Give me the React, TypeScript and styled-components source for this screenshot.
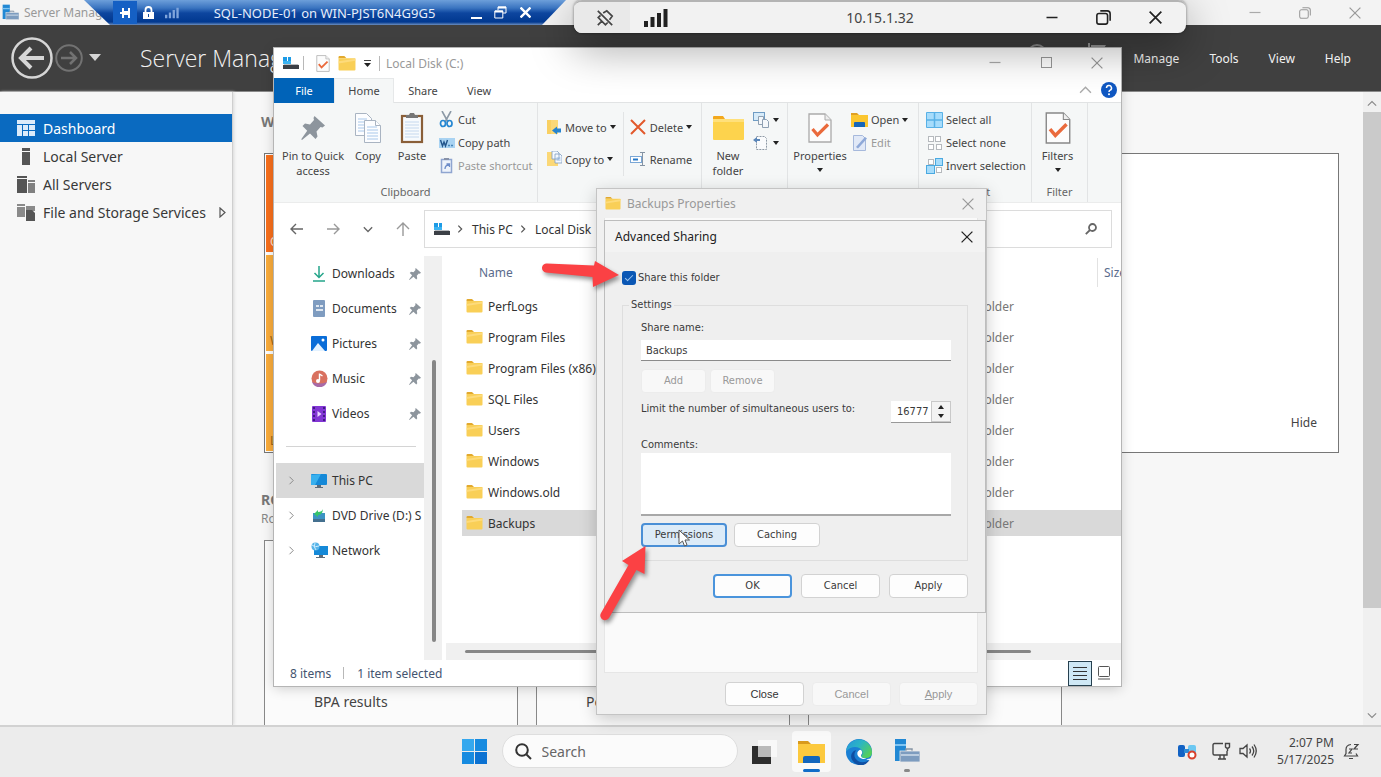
import React from "react";
import styled, { createGlobalStyle, css } from "styled-components";

const ui = `"Noto Sans", "Open Sans", sans-serif`;
const dialogFont = `"DejaVu Sans Condensed", "DejaVu Sans", sans-serif`;

const Global = createGlobalStyle`
  *, *::before, *::after { box-sizing: border-box; }
  body { margin: 0; font-family: ${ui}; font-size: 12px; color: #333; overflow: hidden; }
  button, input, textarea { font: inherit; color: inherit; margin: 0; padding: 0; border: 0; background: none; border-radius: 0; }
  svg { display: block; flex: none; }
  h1, h2, ul, p { margin: 0; padding: 0; font-weight: inherit; font-size: inherit; }
  ul { list-style: none; }
`;

/* ---------- desktop and Server Manager ---------- */

const Desktop = styled.div`
  position: relative;
  display: flex;
  flex-direction: column;
  height: 100vh;
  overflow: hidden;
  background: #f7f7f7;
`;

const ServerManager = styled.section`
  flex: 1;
  min-height: 0;
  display: flex;
  flex-direction: column;
`;

const ServerTitle = styled.header`
  display: flex;
  align-items: center;
  height: 25px;
  padding: 0 20px 0 2px;
  background: #f3f3f3;
  color: #999;
`;

const ServerName = styled.span`
  flex: 1;
  margin-left: 5px;
`;

const Controls = styled.div<{ $gap: number }>`
  display: flex;
  align-items: center;
  gap: ${(p) => p.$gap}px;
`;

const IconButton = styled.button`
  display: grid;
  place-items: center;
  min-width: 12px;
  flex: none;
`;

const ServerHeader = styled.div`
  display: flex;
  align-items: center;
  height: 67px;
  padding: 0 30px 0 11px;
  background: #404040;
  border-bottom: 1px solid #8a8a8a;
  color: #f2f2f2;
`;

const ServerHeading = styled.h1`
  flex: 1;
  margin-left: 37px;
  font-family: "Open Sans", ${ui};
  font-size: 23px;
  font-weight: 300;
  white-space: nowrap;
`;

const HeaderIcons = styled.div`
  display: flex;
  gap: 41px;
  margin-right: 25px;
`;

const MenuBar = styled.nav`
  display: flex;
  gap: 30px;
`;

const ServerBody = styled.div`
  flex: 1;
  min-height: 0;
  display: flex;
`;

const SideNav = styled.nav`
  width: 233px;
  padding-top: 22px;
  border-right: 1px solid #cfcfcf;
  box-shadow: 1px 0 3px #d8d8d8;
`;

const SideItem = styled.a<{ $active?: boolean }>`
  display: flex;
  align-items: center;
  gap: 8px;
  height: 28px;
  padding: 0 4px 0 17px;
  font-size: 14px;
  text-decoration: none;
  white-space: nowrap;
  color: ${(p) => (p.$active ? "#fff" : "#383838")};
  background: ${(p) => (p.$active ? "#0a6ac0" : "none")};
  & > svg { margin-left: 4px; }
`;

const SideIcon = styled.span`
  display: grid;
  place-items: center;
  width: 18px;
`;

const Dashboard = styled.main`
  flex: 1;
  min-width: 0;
  overflow: hidden;
  padding: 20px 24px 0 31px;
`;

const SectionTitle = styled.h2`
  font-size: 14px;
  font-weight: 700;
  line-height: 20px;
  color: #777;
  margin-left: -3px;
  white-space: nowrap;
`;

const SectionNote = styled.p`
  margin-left: -3px;
  line-height: 18px;
  color: #888;
`;

const WelcomeBox = styled.div`
  display: flex;
  justify-content: space-between;
  align-items: flex-end;
  height: 300px;
  margin: 21px 0 37px;
  border: 1px solid #777;
  background: #fff;
`;

const Tiles = styled.div`
  display: flex;
  flex-direction: column;
  gap: 3px;
  width: 180px;
  height: 100%;
  padding: 1px;
`;

const Tile = styled.a<{ $strong?: boolean }>`
  flex: 1;
  display: flex;
  align-items: flex-end;
  padding: 0 4px 2px;
  text-decoration: none;
  color: ${(p) => (p.$strong ? "#ffe3cf" : "#9c6415")};
  background: ${(p) => (p.$strong ? "#f9701c" : "#fbad3c")};
`;

const HideButton = styled.button`
  margin: 0 21px 21px 0;
  color: #444;
`;

const RoleCards = styled.div`
  display: flex;
  gap: 18px;
  margin-top: 12px;
`;

const RoleCard = styled.div`
  width: 254px;
  height: 240px;
  padding: 151px 0 0 49px;
  border: 1px solid #888;
  background: #fbfbfb;
  font-size: 14px;
  line-height: 20px;
  color: #444;
`;

const PageScroll = styled.div`
  display: flex;
  flex-direction: column;
  align-items: center;
  width: 18px;
  padding: 7px 0 5px;
  background: #f0f0f0;
`;

const PageThumb = styled.div`
  flex: 498;
  width: 18px;
  margin-top: 3px;
  background: #cacaca;
`;

const PageTrack = styled.div`
  flex: 102;
`;

/* ---------- remote session bars ---------- */

const SessionBar = styled.div`
  position: absolute;
  z-index: 4;
  top: 0;
  left: 84px;
  display: flex;
  align-items: center;
  width: 482px;
  height: 25px;
  padding: 0 35px 0 29px;
  font-size: 13px;
  color: #e6eefb;
  background: linear-gradient(#6d9fda 0, #3a74c0 8px, #0d469f 13px, #01388f 22px, #6d8fc0 25px);
  clip-path: polygon(0 0, 100% 0, 458px 100%, 26px 100%);
`;

const SessionPin = styled(IconButton)`
  width: 24px;
  height: 23px;
  background: #1560c4;
`;

const SessionStatus = styled.div`
  display: flex;
  align-items: center;
  gap: 11px;
  margin-left: 6px;
`;

const SessionName = styled.span`
  flex: 1;
  text-align: center;
  white-space: nowrap;
`;

const ConnectionBar = styled.div`
  position: absolute;
  z-index: 5;
  top: 0;
  left: 574px;
  display: flex;
  align-items: stretch;
  width: 612px;
  height: 33px;
  overflow: hidden;
  border-top: 2px solid #b4b4b4;
  border-radius: 8px;
  background: #f2f2f2;
  color: #444;
`;

const ConnectionShadow = styled.div`
  position: absolute;
  z-index: 3;
  top: 0;
  left: 574px;
  width: 612px;
  height: 33px;
  border-radius: 8px;
  box-shadow: 0 14px 44px rgba(0, 0, 0, 0.4), 0 0 3px rgba(0, 0, 0, 0.5);
`;

const UnpinArea = styled(IconButton)`
  width: 56px;
  padding-left: 5px;
  background: #e9e9e9;
`;

const ConnectionBody = styled.div`
  flex: 1;
  display: flex;
  align-items: center;
  justify-content: space-between;
  padding: 0 24px 0 14px;
  font-size: 14px;
`;

const ConnectionAddress = styled.span`
  padding-left: 46px;
`;

/* ---------- File Explorer ---------- */

const Explorer = styled.section`
  position: absolute;
  z-index: 1;
  top: 48px;
  right: 260px;
  bottom: 91px;
  left: 274px;
  display: flex;
  flex-direction: column;
  background: #fff;
  box-shadow: 0 0 0 1px #b5b5b5, 0 2px 12px rgba(0, 0, 0, 0.2);
  overflow: hidden;
`;

const ExplorerTitle = styled.header`
  display: flex;
  align-items: center;
  height: 30px;
  padding: 0 18px 0 8px;
  color: #999;
`;

const TitleText = styled.span`
  flex: 1;
  margin-left: 6px;
`;

const Bar = styled.i<{ $h: number; $m: string }>`
  width: 1px;
  height: ${(p) => p.$h}px;
  margin: ${(p) => p.$m};
  background: #b8b8b8;
`;

const QuickItem = styled(IconButton)`
  min-width: 0;
  margin-right: 8px;
`;

const Tabs = styled.nav`
  display: flex;
  height: 25px;
  font-size: 11px;
  border-bottom: 1px solid #e1e3e4;
`;

const Tab = styled.button<{ $kind?: "file" | "active"; $w: number }>`
  width: ${(p) => p.$w}px;
  height: 25px;
  color: #444;
  ${(p) => p.$kind === "file" && css`background: #0063b8; color: #fff;`}
  ${(p) => p.$kind === "active" && css`background: #f5f7f7; box-shadow: inset 1px 1px #e6e8e9, inset -1px 0 #e6e8e9;`}
`;

const TabsEnd = styled.div`
  flex: 1;
  display: flex;
  align-items: center;
  justify-content: flex-end;
  gap: 9px;
  padding-right: 4px;
`;

const Ribbon = styled.div`
  display: flex;
  height: 100px;
  background: #f5f7f7;
  border-bottom: 1px solid #ebecec;
  font-size: 11px;
  line-height: 15px;
  color: #444;
`;

const Group = styled.div<{ $w: number }>`
  display: flex;
  flex-direction: column;
  width: ${(p) => p.$w}px;
  border-right: 1px solid #e2e4e5;
`;

const GroupItems = styled.div<{ $pad?: number }>`
  flex: 1;
  display: flex;
  padding-left: ${(p) => p.$pad ?? 0}px;
`;

const GroupLabel = styled.div`
  height: 18px;
  text-align: center;
  color: #666;
`;

const BigButton = styled.button<{ $w: number }>`
  display: flex;
  flex-direction: column;
  align-items: center;
  width: ${(p) => p.$w}px;
  padding-top: 9px;
  text-align: center;
  line-height: 15px;
`;

const BigIcon = styled.span`
  display: grid;
  place-items: center;
  height: 32px;
  margin-bottom: 4px;
`;

const SmallColumn = styled.div<{ $top: number; $left?: number }>`
  display: flex;
  flex-direction: column;
  padding: ${(p) => p.$top}px 0 0 ${(p) => p.$left ?? 0}px;
`;

const SmallButton = styled.button<{ $h?: number; $dim?: boolean }>`
  display: flex;
  align-items: center;
  gap: 3px;
  height: ${(p) => p.$h ?? 23}px;
  white-space: nowrap;
  color: ${(p) => (p.$dim ? "#999" : "#444")};
`;

const ColumnRule = styled.i`
  width: 1px;
  height: 64px;
  margin: 9px 6px 0 7px;
  background: #e2e4e5;
`;

const CaretLine = styled.span`
  display: grid;
  place-items: center;
  height: 13px;
`;

const AddressRow = styled.div`
  display: flex;
  align-items: center;
  height: 52px;
  margin-bottom: 1px;
  padding: 0 9px 0 16px;
`;

const NavButtons = styled.div`
  display: flex;
  gap: 22px;
  width: 134px;
`;

const Address = styled.div`
  flex: 1;
  display: flex;
  align-items: center;
  gap: 7px;
  height: 38px;
  padding-left: 8px;
  border: 1px solid #dcdcdc;
  color: #333;
`;

const SearchField = styled.button`
  display: flex;
  align-items: center;
  justify-content: flex-end;
  width: 180px;
  height: 38px;
  margin-left: 8px;
  padding-right: 14px;
  border: 1px solid #dcdcdc;
`;

const ExplorerBody = styled.div`
  flex: 1;
  min-height: 0;
  display: flex;
`;

const Tree = styled.ul`
  width: 150px;
  padding-left: 2px;
  overflow: hidden;
`;

const TreeItem = styled.li<{ $selected?: boolean }>`
  display: grid;
  grid-template-columns: 35px 21px 1fr auto;
  align-items: center;
  height: 35px;
  padding-right: 3px;
  white-space: nowrap;
  background: ${(p) => (p.$selected ? "#d9d9d9" : "none")};
`;

const TreeMark = styled.span`
  padding-left: 12px;
`;

const TreeRule = styled.li`
  height: 1px;
  margin: 15px 8px 16px 10px;
  background: #d4d4d4;
`;

const TreeScroll = styled.div`
  width: 18px;
  padding: 104px 6px 18px 8px;
  background: #f0f0f0;
`;

const Thumb = styled.div`
  height: 100%;
  border-radius: 2px;
  background: #868686;
`;

const Listing = styled.div`
  flex: 1;
  min-width: 0;
  display: flex;
  flex-direction: column;
  margin-left: 4px;
`;

const ListArea = styled.div`
  flex: 1;
  min-height: 0;
  padding-left: 16px;
  overflow: hidden;
`;

const Files = styled.table`
  width: 100%;
  table-layout: fixed;
  border-spacing: 0;
  th, td { padding: 0; text-align: left; font-weight: 400; white-space: nowrap; overflow: hidden; }
  th { height: 36px; padding-bottom: 4px; color: #5a6b8c; }
`;

const NameHead = styled.div`
  padding-left: 17px;
`;

const SizeHead = styled.div`
  height: 29px;
  padding: 6px 0 0 6px;
  border-left: 1px solid #e2e2e2;
`;

const FileRow = styled.tr<{ $selected?: boolean }>`
  td {
    height: 31px;
    border-top: 1px solid transparent;
    border-bottom: 4px solid transparent;
    background: ${(p) => (p.$selected ? "#d9d9d9" : "#fff")};
    background-clip: padding-box;
  }
  td + td { color: #777; }
`;

const FileName = styled.div`
  display: flex;
  align-items: center;
  gap: 5px;
  padding-left: 4px;
`;

const ListScroll = styled.div`
  height: 17px;
  padding: 7px 90px 7px 19px;
  background: #f0f0f0;
`;

const StatusBar = styled.footer`
  display: flex;
  align-items: center;
  height: 26px;
  padding: 0 5px 0 16px;
  color: #44546f;
`;

const StatusSpace = styled.span`
  flex: 1;
`;

const ViewButton = styled.button<{ $on?: boolean }>`
  display: grid;
  place-items: center;
  width: 24px;
  height: 25px;
  border: 1px solid ${(p) => (p.$on ? "#26404f" : "transparent")};
  background: ${(p) => (p.$on ? "#cfe8f5" : "none")};
`;

/* ---------- dialogs ---------- */

const PropertiesWindow = styled.section`
  position: absolute;
  z-index: 2;
  top: 188px;
  left: 596px;
  display: flex;
  flex-direction: column;
  width: 391px;
  height: 527px;
  padding: 0 8px 8px 7px;
  border: 1px solid #c4c4c4;
  background: #f0f0f0;
  box-shadow: 0 4px 16px rgba(0, 0, 0, 0.2);
`;

const DialogTitle = styled.header<{ $dim?: boolean }>`
  display: flex;
  align-items: center;
  gap: 6px;
  height: ${(p) => (p.$dim ? 29 : 31)}px;
  padding: 0 ${(p) => (p.$dim ? 4 : 12)}px 0 ${(p) => (p.$dim ? 1 : 10)}px;
  color: ${(p) => (p.$dim ? "#999" : "#222")};
  background: ${(p) => (p.$dim ? "none" : "#f3f3f3")};
`;

const DialogName = styled.span`
  flex: 1;
`;

const PropertiesPanel = styled.div`
  flex: 1;
  background: #fafafa;
  border: 1px solid #e6e6e6;
  border-top: 0;
`;

const ButtonRow = styled.div<{ $gap: number; $mt: number }>`
  display: flex;
  justify-content: flex-end;
  gap: ${(p) => p.$gap}px;
  margin-top: ${(p) => p.$mt}px;
`;

const PushButton = styled.button<{ $w?: number; $tone?: "ring" | "hover" | "off" }>`
  width: ${(p) => p.$w ?? 79}px;
  height: 24px;
  border: 1px solid #d2d2d2;
  border-radius: 4px;
  background: #fdfdfd;
  ${(p) => p.$tone === "ring" && css`border: 2px solid #4a94dc;`}
  ${(p) => p.$tone === "hover" && css`border: 2px solid #4a8fd6; background: #dcebf8;`}
  ${(p) => p.$tone === "off" && css`border-color: #ececec; background: #f8f8f8; color: #999;`}
`;

const SheetButtons = styled(ButtonRow)`
  font-family: "Liberation Sans", Arial, sans-serif;
  font-size: 11px;
`;

const SharingWindow = styled.section`
  position: absolute;
  top: 31px;
  left: 7px;
  width: 382px;
  border: 1px solid #bdbdbd;
  background: #efefef;
`;

const SharingForm = styled.form`
  display: flex;
  flex-direction: column;
  padding: 18px 17px 14px 17px;
  font-family: ${dialogFont};
  font-size: 11px;
  line-height: 16px;
  color: #3a3a3a;
`;

const CheckLabel = styled.label`
  display: flex;
  align-items: center;
  gap: 2px;
`;

const CheckBox = styled.input`
  appearance: none;
  width: 14px;
  height: 14px;
  border-radius: 3px;
  background: #0a57b5;
  display: grid;
  place-items: center;
  &:checked::after {
    content: "";
    width: 8px;
    height: 4px;
    margin-top: -2px;
    border: solid #9cc4ee;
    border-width: 0 0 1px 1px;
    transform: rotate(-45deg);
  }
`;

const Settings = styled.fieldset`
  display: flex;
  flex-direction: column;
  min-width: 0;
  margin: 11px 0 0;
  padding: 7px 16px 13px 18px;
  border: 1px solid #dedede;
  legend { margin-left: -12px; padding: 0 2px; }
`;

const TextBox = styled.input`
  width: 100%;
  height: 21px;
  margin-top: 4px;
  padding: 0 5px;
  background: #fff;
  border-bottom: 1px solid #8a8a8a;
`;

const Comments = styled.textarea`
  display: block;
  width: 100%;
  height: 63px;
  resize: none;
  background: #fff;
  border-bottom: 2px solid #a8a8a8;
`;

const LimitRow = styled.div`
  display: flex;
  align-items: flex-start;
  justify-content: space-between;
  margin: 8px 0 14px;
  white-space: nowrap;
`;

const SpinBox = styled.div`
  display: flex;
  width: 60px;
  height: 22px;
  background: #fff;
  border-bottom: 1px solid #999;
  input { width: 40px; padding-left: 6px; }
`;

const SpinButtons = styled.div`
  flex: 1;
  display: grid;
  border: 1px solid #c9c9c9;
  background: #f3f3f3;
  button { display: grid; place-items: center; }
`;

const LeftButtons = styled.div<{ $gap: number; $mt: number }>`
  display: flex;
  gap: ${(p) => p.$gap}px;
  margin-top: ${(p) => p.$mt}px;
`;

const Overlay = styled.svg<{ $x: number; $y: number }>`
  position: absolute;
  z-index: 6;
  left: ${(p) => p.$x}px;
  top: ${(p) => p.$y}px;
  overflow: visible;
  pointer-events: none;
`;

/* ---------- taskbar ---------- */

const Taskbar = styled.footer`
  display: grid;
  grid-template-columns: 1fr auto 1fr;
  align-items: center;
  height: 52px;
  padding-bottom: 2px;
  border-top: 2px solid #d2d2d2;
  background: #ececec;
`;

const TaskCenter = styled.div`
  grid-column: 2;
  display: flex;
  align-items: center;
`;

const SearchPill = styled.label`
  display: flex;
  align-items: center;
  gap: 10px;
  width: 236px;
  height: 34px;
  margin: 0 14px 0 15px;
  padding-left: 12px;
  border: 1px solid #dedede;
  border-radius: 17px;
  background: #fbfbfb;
  font-size: 14px;
  input { width: 150px; outline: 0; }
  input::placeholder { color: #666; opacity: 1; }
`;

const TaskButton = styled.button<{ $active?: boolean }>`
  display: flex;
  flex-direction: column;
  align-items: center;
  justify-content: flex-end;
  width: ${(p) => (p.$active ? 39 : 26)}px;
  height: 41px;
  border-radius: 4px;
  background: ${(p) => (p.$active ? "#f9f9f9" : "none")};
`;

const TaskMark = styled.i<{ $kind: "none" | "dot" | "bar" }>`
  width: ${(p) => (p.$kind === "bar" ? 17 : 6)}px;
  height: 3px;
  margin-top: ${(p) => (p.$kind === "none" ? 4 : 5)}px;
  border-radius: 2px;
  background: ${(p) => ({ none: "transparent", dot: "#888", bar: "#0f6cc8" })[p.$kind]};
`;

const TaskGap = styled.i<{ $w: number }>`
  width: ${(p) => p.$w}px;
`;

const Tray = styled.div`
  display: flex;
  align-items: center;
  justify-content: flex-end;
  padding-right: 21px;
`;

const Clock = styled.time`
  margin: 0 9px 0 20px;
  text-align: right;
  line-height: 17px;
  color: #444;
`;

/* ---------- icons ---------- */

const Close = ({ s = 11, c = "#888", w = 1.2 }: { s?: number; c?: string; w?: number }) => (
  <svg width={s} height={s} viewBox="0 0 12 12" stroke={c} strokeWidth={w} fill="none"><path d="M.6.6l10.8 10.8M11.4.6L.6 11.4" /></svg>
);
const Minimize = ({ c = "#888", w = 1.2 }: { c?: string; w?: number }) => (
  <svg width="12" height="12" stroke={c} strokeWidth={w}><path d="M.5 5.500h11" /></svg>
);
const Maximize = () => (
  <svg width="12" height="12" fill="none" stroke="#999"><rect x="1.500" y=".5" width="10" height="10" /></svg>
);
const Restore = ({ s = 12, c = "#888", w = 1.2 }: { s?: number; c?: string; w?: number }) => (
  <svg width={s} height={s} viewBox="0 0 14 14" fill="none" stroke={c} strokeWidth={w}>
    <rect x=".8" y="3.2" width="10" height="10" rx="2" /><path d="M4 .8h6.500a2.800 2.800 0 0 1 2.700 2.700V10" />
  </svg>
);
const Caret = () => (
  <svg width="6" height="4"><path d="M0 0h6L3 4z" fill="#222" /></svg>
);
const Chevron = ({ d = "M2 1l5 5-5 5", c = "#888", w = 1.3, s = 10 }: { d?: string; c?: string; w?: number; s?: number }) => (
  <svg width={s} height={s} viewBox="0 0 12 12" fill="none" stroke={c} strokeWidth={w}><path d={d} /></svg>
);
const UP = "M1 8l5-5 5 5";
const DOWN = "M1 4l5 5 5-5";

const Folder = ({ w = 17, h = 14 }: { w?: number; h?: number }) => (
  <svg width={w} height={h} viewBox="0 0 34 28" preserveAspectRatio="none">
    <path d="M1 2q0-2 2-2h9l4 4H1z" fill="#e2a92d" />
    <path d="M1 4h31q1 0 1 1v20q0 2-2 2H3q-2 0-2-2z" fill="#f9cf57" />
    <path d="M1 10L33 5v4L1 14z" fill="#ffe08a" opacity=".7" />
  </svg>
);
const Drive = () => (
  <svg width="17" height="13"><path d="M1 0h4v4H1zM6 0h3v4H6z" fill="#1d9be6" /><path d="M1 4h8v3H1z" fill="#3cb4f2" /><path d="M2 7h14l1 2H1z" fill="#b9bcc0" /><path d="M1 8h16v4H1z" fill="#3c4046" /></svg>
);
const ServerIcon = ({ s = 18 }: { s?: number }) => (
  <svg width={s} height={s} viewBox="0 0 26 26">
    <path d="M1 1h11v22H1z" fill="#2188d4" /><path d="M1 6h11v2H1z" fill="#7fc4f2" />
    <path d="M12 13v-2h6v2" fill="none" stroke="#8795a5" strokeWidth="1.500" />
    <rect x="6" y="13" width="20" height="11" fill="#7d9cbf" stroke="#ececec" strokeWidth=".8" /><path d="M7 17h18" stroke="#cfdcea" strokeWidth="1.500" />
  </svg>
);
const Doc = ({ w = 24, h = 30, c = "#aaa" }: { w?: number; h?: number; c?: string }) => (
  <svg width={w} height={h} viewBox="0 0 24 30" fill="none">
    <path d="M1 1h16l6 6v22H1z" fill="#fcfcfc" stroke={c} strokeWidth="1.300" /><path d="M17 1v6h6" stroke={c} fill="#eee" />
    <path d="M4.500 16l5 6L20 11.500" stroke="#ea6a3c" strokeWidth="3.200" />
  </svg>
);
const Pin = ({ s = 12 }: { s?: number }) => (
  <svg width={s} height={s} viewBox="0 0 24 24" fill="#8d959d">
    <path d="M13.500 0l10.500 9.500-2.500 2-2-.5-4 4.500 1 5-2 2.500-5.500-5.500L1 24l-.8-.8 6-8.500L1.500 10l2.500-2.500 5 1 4-4.500-.5-2z" />
  </svg>
);
const CopyIcon = () => (
  <svg width="27" height="31" fill="#fcfdff" stroke="#a9b4c2">
    <path d="M.5.5h11l5 5v17H.5z" /><path d="M3 6h9M3 9h10M3 12h10M3 15h10M3 18h10" stroke="#a9c8ea" />
    <path d="M9.500 7.500h11l5 5v17h-16z" /><path d="M20.500 7.500v5h5" /><path d="M12 14h10M12 17h11M12 20h11M12 23h11M12 26h11" stroke="#a9c8ea" />
  </svg>
);
const PasteIcon = () => (
  <svg width="24" height="32" fill="none">
    <rect x="2" y="4" width="20" height="26" fill="#f7fafd" stroke="#8a5f38" strokeWidth="2.200" />
    <path d="M6 6h12V3h-3l-1-2h-4L9 3H6z" fill="#777" />
    <path d="M5 10h14M5 13h14M5 16h14M5 19h14M5 22h14M5 25h14" stroke="#c5d8ee" />
  </svg>
);
const CutIcon = () => (
  <svg width="16" height="17" fill="none"><path d="M3 0l6 11M12 0L6 11" stroke="#8b99a6" strokeWidth="1.600" /><ellipse cx="4" cy="12.500" rx="2.500" ry="3" stroke="#2587d2" strokeWidth="1.700" /><ellipse cx="10.500" cy="12.500" rx="2.500" ry="3" stroke="#2587d2" strokeWidth="1.700" /></svg>
);
const PathIcon = () => (
  <svg width="16" height="10"><rect width="16" height="10" fill="#a9d3f2" /><path d="M1.500 2l2 6 1.500-4 1.500 4 2-6" fill="none" stroke="#23558c" strokeWidth="1.400" /><path d="M9 7.500h6" stroke="#4785b9" strokeDasharray="2 1" strokeWidth="1.500" /></svg>
);
const ShortcutIcon = () => (
  <svg width="16" height="16" fill="none"><rect x="2.500" y="1.500" width="10" height="13" fill="#eef3fb" stroke="#8fa5d0" strokeWidth="1.500" /><path d="M5 1h5" stroke="#8792a8" strokeWidth="2" /><path d="M6 11q0-4 4-4M7.500 6H10.500v3" stroke="#6d8cc8" strokeWidth="1.300" /></svg>
);
const MoveIcon = () => (
  <svg width="16" height="16"><path d="M1 1h11v14H1z" fill="#fbd877" /><path d="M1 1h4v14H1z" fill="#f9d062" /><path d="M6 11.500l5-4v2h4v4h-4v2z" fill="#2684d0" /></svg>
);
const CopyToIcon = () => (
  <svg width="16" height="16"><path d="M1 1h11v14H1z" fill="#fbd877" /><path d="M6 0h5l2 2v6H6zM9 3h5l2 2v7H9z" fill="#f4f9ff" stroke="#7f9dc0" strokeWidth=".8" /><path d="M10.500 7h4M10.500 9h4" stroke="#7ba7d8" strokeWidth=".8" /></svg>
);
const DeleteIcon = () => (
  <svg width="17" height="16" stroke="#e2592c" strokeWidth="2" fill="none"><path d="M1 1l14 14M15 1L1 15" /></svg>
);
const RenameIcon = () => (
  <svg width="17" height="14" fill="none"><rect x=".5" y="4.500" width="11" height="6" fill="#fff" stroke="#7aa7d6" /><path d="M3 7.500h5" stroke="#2679c8" strokeWidth="2" /><path d="M10 .5h5M10 13.500h5M12.500 1v12" stroke="#8594a4" /></svg>
);
const BigFolder = () => (
  <svg width="31" height="26"><path d="M0 2q0-1 1-1h9l2 3h-12z" fill="#f3a81c" /><path d="M0 4h31v20q0 1-1 1H1q-1 0-1-1z" fill="#fdd34d" /><path d="M0 4h31v3H0z" fill="#ffe07a" /></svg>
);
const NewItemIcon = () => (
  <svg width="17" height="16" fill="none" stroke="#8fa0b2"><rect x=".5" y=".5" width="11" height="8" fill="#d7ebf9" stroke="#6f9cc4" /><path d="M5.500 4.500h5v8h-5z" fill="#f5f8fb" /><path d="M9.500 7.500h4l2 2v6h-6z" fill="#f5f8fb" /></svg>
);
const EasyIcon = () => (
  <svg width="17" height="16" fill="none"><path d="M3.500 1.500h8l2 2v11h-10z" stroke="#8e99a5" fill="#fafbfc" strokeDasharray="2 1" /><path d="M0 5l4-3v2h3v2H4v2z" fill="#5b86b8" /></svg>
);
const OpenIcon = () => (
  <svg width="17" height="16"><path d="M0 1h6l2 2H0z" fill="#e0a022" /><path d="M0 3h17v12H0z" fill="#fbc62f" /><path d="M3 15v-4q0-1 1-1h9q1 0 1 1v4z" fill="#1666b8" /></svg>
);
const EditIcon = () => (
  <svg width="17" height="16"><path d="M2.500.5h9l3 3v12h-12z" fill="#e1e9f7" stroke="#a6b9dc" /><path d="M5 12L14 2l2 1.500L7 13.500z" fill="#8fa9d8" /></svg>
);
const GridIcon = ({ kind }: { kind: "all" | "none" | "invert" }) => {
  if (kind === "all") {
    return (
      <svg width="17" height="16"><path d="M.5.5h16v15H.5z" fill="#a6dcfb" stroke="#58b1e6" /><path d="M8.500 0v16M0 8h17" stroke="#58b1e6" strokeWidth="1.500" /></svg>
    );
  }
  const cell = (a: boolean) => ({ fill: a ? "#a6dcfb" : "#fff", stroke: a ? "#4aa9e0" : "#b5b9bd" });
  const v = kind === "invert";
  return (
    <svg width="17" height="16">
      <rect x="2.500" y="1.500" width="5" height="5" {...cell(false)} /><rect x="9.500" y={v ? ".5" : "1.500"} width={v ? 7 : 5} height={v ? 7 : 5} {...cell(v)} />
      <rect x={v ? ".5" : "2.500"} y={v ? "7.500" : "9.500"} width={v ? 8 : 5} height={v ? 8 : 5} {...cell(v)} /><rect x="10.500" y="9.500" width="5" height="5" {...cell(false)} />
    </svg>
  );
};
const Arrow = ({ d, c = "#666" }: { d: string; c?: string }) => (
  <svg width="14" height="14" fill="none" stroke={c} strokeWidth="1.400"><path d={d} /></svg>
);
const Signal = ({ w, h, c }: { w: number; h: number; c: string }) => (
  <svg width={w} height={h} viewBox="0 0 24 18" fill={c}><path d="M0 12h4v6H0zM6.500 8h4v10h-4zM13 4h4v14h-4zM19.500 0h4v18h-4z" /></svg>
);
const treeIcons: Record<string, React.ReactNode> = {
  Downloads: <svg width="16" height="16" fill="none" stroke="#25a58a" strokeWidth="1.500"><path d="M8 0v11M3.500 7L8 11.500 12.500 7M2 15h12" /></svg>,
  Documents: <svg width="16" height="17"><rect x="2" width="12" height="17" rx="1" fill="#7f9cc0" /><path d="M5 6h3M9 6h3M5 10h7" stroke="#fff" strokeWidth="1.300" /></svg>,
  Pictures: <svg width="16" height="15"><rect width="16" height="15" rx="1" fill="#0a6dd8" /><path d="M1 15l6-8 7 8z" fill="#e4f2ff" /><circle cx="12" cy="4" r="1.500" fill="#fff" /></svg>,
  Music: <svg width="17" height="17"><circle cx="8.500" cy="8.500" r="8" fill="#d9715f" /><path d="M1 12a8 8 0 0 0 15 0 20 20 0 0 1-15 0z" fill="#a76aa8" /><path d="M8.500 3.500v7M8.500 4l3 2" stroke="#fff" strokeWidth="1.400" /><circle cx="7" cy="11" r="2" fill="#fff" /></svg>,
  Videos: <svg width="16" height="16"><rect x="1" width="14" height="16" rx="1" fill="#8236d4" /><path d="M3 1v14M13 1v14" stroke="#431b86" strokeWidth="2" strokeDasharray="2 2" /><path d="M6.500 5l4 3-4 3z" fill="#e8d6ff" /></svg>,
  "This PC": <svg width="16" height="14"><rect width="16" height="11" rx="1" fill="#1589d8" /><path d="M0 1L10 0 4 11H0z" fill="#38b0ee" /><path d="M6 11h4v2H6zM4 13h8v1H4z" fill="#5d6d7c" /></svg>,
  "DVD Drive (D:) S": <svg width="16" height="14"><rect x="2" y="4" width="12" height="8" fill="#3c93c4" /><path d="M3 5l4-4v2q4 0 5-3-.5 6-5 6v2z" fill="#38c46a" /><path d="M2 10h12v3H2z" fill="#44708f" /></svg>,
  Network: <svg width="17" height="17"><rect x="3" y="4" width="14" height="9" fill="#1589d8" /><circle cx="4.500" cy="4.500" r="4" fill="#58b4e8" /><path d="M1 3q3 3 7 1M4 1q-2 4 1 7" stroke="#c9ecff" fill="none" /><path d="M8 13h4v2H8zM5 15h9v1H5z" fill="#5d6d7c" /></svg>,
};

/* ---------- data ---------- */

const quickAccess = ["Downloads", "Documents", "Pictures", "Music", "Videos"];
const devices = ["This PC", "DVD Drive (D:) S", "Network"];
const files = ["PerfLogs", "Program Files", "Program Files (x86)", "SQL Files", "Users", "Windows", "Windows.old", "Backups"];

function ServerManagerWindow() {
  return (
    <ServerManager>
      <ServerTitle>
        <ServerIcon s={17} />
        <ServerName>Server Manager</ServerName>
        <Controls $gap={38}>
          <IconButton aria-label="Minimize"><Minimize c="#aaa" /></IconButton>
          <IconButton aria-label="Restore"><Restore c="#999" /></IconButton>
          <IconButton aria-label="Close"><Close s={12} c="#999" /></IconButton>
        </Controls>
      </ServerTitle>
      <ServerHeader>
        <IconButton aria-label="Back">
          <svg width="42" height="42" fill="none" stroke="#d6d6d6"><circle cx="21" cy="21" r="19.500" strokeWidth="2.500" /><path d="M33 21H11M20 11L10 21l10 10" strokeWidth="4" /></svg>
        </IconButton>
        <IconButton aria-label="Forward">
          <svg width="32" height="28" fill="none" stroke="#727272"><circle cx="16" cy="14" r="12.800" strokeWidth="2" /><path d="M8 14h15M17 8l6 6-6 6" strokeWidth="2.500" /></svg>
        </IconButton>
        <IconButton aria-label="History"><svg width="18" height="8"><path d="M4 0h12l-6 7z" fill="#d6d6d6" /></svg></IconButton>
        <ServerHeading>Server Manager</ServerHeading>
        <HeaderIcons>
          <svg width="20" height="30" fill="none" stroke="#8c8c8c" strokeWidth="2"><circle cx="10" cy="11" r="9" /></svg>
          <svg width="20" height="30"><path d="M0 0h2v30H0zM3 2h15l-3 5 3 5H3z" fill="#9a9a9a" /></svg>
        </HeaderIcons>
        <MenuBar>
          {["Manage", "Tools", "View", "Help"].map((m) => <button key={m}>{m}</button>)}
        </MenuBar>
      </ServerHeader>
      <ServerBody>
        <SideNav>
          <SideItem href="#dashboard" $active>
            <SideIcon><svg width="18" height="16" fill="#dcebfa"><path d="M0 0h18v4H0zM0 5h5v11H0zM6 5h5v5H6zM12 5h6v5h-6zM6 11h5v5H6zM12 11h6v5h-6z" /></svg></SideIcon>
            Dashboard
          </SideItem>
          <SideItem href="#local">
            <SideIcon><svg width="8" height="17" fill="#555"><path d="M0 0h8v3H0zM0 4h8v13H0z" /></svg></SideIcon>
            Local Server
          </SideItem>
          <SideItem href="#all">
            <SideIcon><svg width="18" height="17"><path d="M0 0h10v2H0zM0 3h10v14H0z" fill="#555" /><path d="M11 4h7v2h-7zM11 7h7v10h-7z" fill="#808080" /></svg></SideIcon>
            All Servers
          </SideItem>
          <SideItem href="#storage">
            <SideIcon><svg width="18" height="17"><path d="M0 0h8v2H0zM0 3h8v10H0zM9 2h9v5H9z" fill="#8a8a8a" /><path d="M9 6h6l3 3v8H9z" fill="#555" /></svg></SideIcon>
            File and Storage Services
            <svg width="9" height="11" fill="none" stroke="#555" strokeWidth="1.200"><path d="M2 1l5 4.500L2 10z" /></svg>
          </SideItem>
        </SideNav>
        <Dashboard>
          <SectionTitle>WELCOME</SectionTitle>
          <WelcomeBox>
            <Tiles>
              <Tile href="#quick" $strong>QUICK</Tile>
              <Tile href="#new">WHAT</Tile>
              <Tile href="#learn">LEARN</Tile>
            </Tiles>
            <HideButton>Hide</HideButton>
          </WelcomeBox>
          <SectionTitle>ROLES</SectionTitle>
          <SectionNote>Roles</SectionNote>
          <RoleCards>
            <RoleCard>BPA results</RoleCard>
            <RoleCard>Performance</RoleCard>
            <RoleCard />
          </RoleCards>
        </Dashboard>
        <PageScroll>
          <Chevron d={UP} />
          <PageThumb />
          <PageTrack />
          <Chevron d={DOWN} />
        </PageScroll>
      </ServerBody>
    </ServerManager>
  );
}

const BigCaret = () => <CaretLine><Caret /></CaretLine>;

function RibbonBar() {
  return (
    <Ribbon>
      <Group $w={264}>
        <GroupItems $pad={6}>
          <BigButton $w={66}><BigIcon><Pin s={24} /></BigIcon>Pin to Quick<br />access</BigButton>
          <BigButton $w={44}><BigIcon><CopyIcon /></BigIcon>Copy</BigButton>
          <BigButton $w={44}><BigIcon><PasteIcon /></BigIcon>Paste</BigButton>
          <SmallColumn $top={5} $left={5}>
            <SmallButton><CutIcon />Cut</SmallButton>
            <SmallButton><PathIcon />Copy path</SmallButton>
            <SmallButton $dim><ShortcutIcon />Paste shortcut</SmallButton>
          </SmallColumn>
        </GroupItems>
        <GroupLabel>Clipboard</GroupLabel>
      </Group>
      <Group $w={164}>
        <GroupItems $pad={8}>
          <SmallColumn $top={8}>
            <SmallButton $h={32}><MoveIcon />Move to<Caret /></SmallButton>
            <SmallButton $h={32}><CopyToIcon />Copy to<Caret /></SmallButton>
          </SmallColumn>
          <ColumnRule />
          <SmallColumn $top={8}>
            <SmallButton $h={32}><DeleteIcon />Delete <Caret /></SmallButton>
            <SmallButton $h={32}><RenameIcon />Rename</SmallButton>
          </SmallColumn>
        </GroupItems>
      </Group>
      <Group $w={86}>
        <GroupItems $pad={3}>
          <BigButton $w={46}><BigIcon><BigFolder /></BigIcon>New<br />folder</BigButton>
          <SmallColumn $top={5} $left={2}>
            <SmallButton aria-label="New item"><NewItemIcon /><Caret /></SmallButton>
            <SmallButton aria-label="Easy access"><EasyIcon /><Caret /></SmallButton>
          </SmallColumn>
        </GroupItems>
      </Group>
      <Group $w={131}>
        <GroupItems $pad={3}>
          <BigButton $w={58}><BigIcon><Doc /></BigIcon>Properties<BigCaret /></BigButton>
          <SmallColumn $top={5} $left={2}>
            <SmallButton><OpenIcon />Open <Caret /></SmallButton>
            <SmallButton $dim><EditIcon />Edit</SmallButton>
          </SmallColumn>
        </GroupItems>
      </Group>
      <Group $w={113}>
        <GroupItems $pad={7}>
          <SmallColumn $top={5}>
            <SmallButton><GridIcon kind="all" />Select all</SmallButton>
            <SmallButton><GridIcon kind="none" />Select none</SmallButton>
            <SmallButton><GridIcon kind="invert" />Invert selection</SmallButton>
          </SmallColumn>
        </GroupItems>
        <GroupLabel>Select</GroupLabel>
      </Group>
      <Group $w={56}>
        <GroupItems>
          <BigButton $w={51}><BigIcon><Doc w={26} h={32} c="#888" /></BigIcon>Filters<BigCaret /></BigButton>
        </GroupItems>
        <GroupLabel>Filter</GroupLabel>
      </Group>
    </Ribbon>
  );
}

function ExplorerWindow() {
  return (
    <Explorer>
      <ExplorerTitle>
        <Drive />
        <Bar $h={14} $m="0 12px 0 4px" />
        <QuickItem aria-label="Properties"><Doc w={14} h={17} /></QuickItem>
        <QuickItem aria-label="New folder"><Folder w={18} h={15} /></QuickItem>
        <QuickItem aria-label="Customize"><svg width="7" height="7"><path d="M0 .5h7" stroke="#444" /><path d="M0 3h7L3.500 7z" fill="#222" /></svg></QuickItem>
        <Bar $h={15} $m="0" />
        <TitleText>Local Disk (C:)</TitleText>
        <Controls $gap={39}>
          <IconButton aria-label="Minimize"><Minimize c="#aaa" /></IconButton>
          <IconButton aria-label="Maximize"><Maximize /></IconButton>
          <IconButton aria-label="Close"><Close s={12} c="#999" /></IconButton>
        </Controls>
      </ExplorerTitle>
      <Tabs>
        <Tab $kind="file" $w={60}>File</Tab>
        <Tab $kind="active" $w={60}>Home</Tab>
        <Tab $w={58}>Share</Tab>
        <Tab $w={54}>View</Tab>
        <TabsEnd>
          <IconButton aria-label="Collapse ribbon"><Chevron d={UP} s={13} c="#aaa" /></IconButton>
          <IconButton aria-label="Help">
            <svg width="16" height="16"><circle cx="8" cy="8" r="8" fill="#1058c2" /><path d="M5.500 6a2.500 2.500 0 1 1 3.700 2.200Q8 8.800 8 10" fill="none" stroke="#fff" strokeWidth="1.500" /><circle cx="8" cy="12.300" r="1" fill="#fff" /></svg>
          </IconButton>
        </TabsEnd>
      </Tabs>
      <RibbonBar />
      <AddressRow>
        <NavButtons>
          <IconButton aria-label="Back"><Arrow d="M13 7H1M6 2L1 7l5 5" /></IconButton>
          <IconButton aria-label="Forward"><Arrow d="M1 7h12M8 2l5 5-5 5" c="#999" /></IconButton>
          <IconButton aria-label="Recent"><Chevron d={DOWN} c="#666" w={1.6} /></IconButton>
          <IconButton aria-label="Up"><Arrow d="M7 14V1M1 7l6-6 6 6" c="#999" /></IconButton>
        </NavButtons>
        <Address>
          <Drive />
          <Chevron s={8} c="#555" w={1.8} />
          <span>This PC</span>
          <Chevron s={8} c="#555" w={1.8} />
          <span>Local Disk</span>
        </Address>
        <SearchField aria-label="Search folder">
          <svg width="12" height="12" fill="none" stroke="#666" strokeWidth="1.800"><circle cx="7.500" cy="4.500" r="3.500" /><path d="M5 7L.8 11.200" /></svg>
        </SearchField>
      </AddressRow>
      <ExplorerBody>
        <Tree>
          {quickAccess.map((n) => (
            <TreeItem key={n}><TreeMark />{treeIcons[n]}<span>{n}</span><Pin /></TreeItem>
          ))}
          <TreeRule />
          {devices.map((n, i) => (
            <TreeItem key={n} $selected={i === 0}><TreeMark><Chevron s={9} /></TreeMark>{treeIcons[n]}<span>{n}</span></TreeItem>
          ))}
        </Tree>
        <TreeScroll><Thumb /></TreeScroll>
        <Listing>
          <ListArea>
            <Files>
              <colgroup><col /><col width="139" /><col width="24" /></colgroup>
              <thead>
                <tr><th><NameHead>Name</NameHead></th><th aria-label="Type" /><th><SizeHead>Size</SizeHead></th></tr>
              </thead>
              <tbody>
                {files.map((f) => (
                  <FileRow key={f} $selected={f === "Backups"}>
                    <td><FileName><Folder />{f}</FileName></td><td>File folder</td><td />
                  </FileRow>
                ))}
              </tbody>
            </Files>
          </ListArea>
          <ListScroll><Thumb /></ListScroll>
        </Listing>
      </ExplorerBody>
      <StatusBar>
        <span>8 items</span><Bar $h={12} $m="0 13px 0 12px" /><span>1 item selected</span>
        <StatusSpace />
        <ViewButton $on aria-label="Details view"><svg width="14" height="13" stroke="#333"><path d="M0 .5h14M0 4.500h14M0 8.500h14M0 12.500h14" /></svg></ViewButton>
        <ViewButton aria-label="Large icons view"><svg width="14" height="14" fill="none" stroke="#555"><rect x="1.500" y=".5" width="11" height="10" rx="1" /><path d="M1 13h12" /></svg></ViewButton>
      </StatusBar>
    </Explorer>
  );
}

function SharingDialog() {
  return (
    <SharingWindow>
      <DialogTitle><DialogName>Advanced Sharing</DialogName><IconButton aria-label="Close"><Close s={12} c="#222" w={1.3} /></IconButton></DialogTitle>
      <SharingForm onSubmit={(e) => e.preventDefault()}>
        <CheckLabel><CheckBox type="checkbox" defaultChecked />Share this folder</CheckLabel>
        <Settings>
          <legend>Settings</legend>
          <label htmlFor="share-name">Share name:</label>
          <TextBox id="share-name" defaultValue="Backups" />
          <LeftButtons $gap={4} $mt={8}>
            <PushButton type="button" $w={65} $tone="off">Add</PushButton>
            <PushButton type="button" $w={65} $tone="off">Remove</PushButton>
          </LeftButtons>
          <LimitRow>
            <label htmlFor="limit">Limit the number of simultaneous users to:</label>
            <SpinBox>
              <input id="limit" defaultValue="16777" />
              <SpinButtons>
                <button type="button" aria-label="Increase"><svg width="6" height="4"><path d="M0 4h6L3 0z" fill="#222" /></svg></button>
                <button type="button" aria-label="Decrease"><Caret /></button>
              </SpinButtons>
            </SpinBox>
          </LimitRow>
          <label htmlFor="comments">Comments:</label>
          <Comments id="comments" />
          <LeftButtons $gap={7} $mt={7}>
            <PushButton type="button" $w={86} $tone="hover">Permissions</PushButton>
            <PushButton type="button" $w={86}>Caching</PushButton>
          </LeftButtons>
        </Settings>
        <ButtonRow $gap={9} $mt={13}>
          <PushButton type="button" $tone="ring">OK</PushButton>
          <PushButton type="button">Cancel</PushButton>
          <PushButton type="button">Apply</PushButton>
        </ButtonRow>
      </SharingForm>
    </SharingWindow>
  );
}

function PropertiesDialog() {
  return (
    <PropertiesWindow>
      <DialogTitle $dim><Folder w={16} h={13} /><DialogName>Backups Properties</DialogName><IconButton aria-label="Close"><Close s={12} c="#999" /></IconButton></DialogTitle>
      <PropertiesPanel />
      <SheetButtons $gap={8} $mt={9}>
        <PushButton>Close</PushButton>
        <PushButton $tone="off">Cancel</PushButton>
        <PushButton $tone="off"><u>A</u>pply</PushButton>
      </SheetButtons>
      <SharingDialog />
    </PropertiesWindow>
  );
}

function RemoteBars() {
  return (
    <>
      <ConnectionShadow />
      <SessionBar>
        <SessionPin aria-label="Pin"><svg width="10" height="12" fill="#fff"><path d="M0 5h3v2H0zM2 1h2v10H2zM4 4h5v4H4zM8 1h2v10H8z" /></svg></SessionPin>
        <SessionStatus>
          <svg width="11" height="13" fill="#fff"><path d="M0 6h11v7H0z" /><path d="M2.500 6V4a3 3 0 0 1 6 0v2" fill="none" stroke="#fff" strokeWidth="1.800" /><path d="M5 8h1v3H5z" fill="#124b9d" /></svg>
          <Signal w={14} h={12} c="#7fa5dc" />
        </SessionStatus>
        <SessionName>SQL-NODE-01 on WIN-PJST6N4G9G5</SessionName>
        <Controls $gap={12}>
          <IconButton aria-label="Minimize"><svg width="12" height="14"><path d="M1 11h11v2H1z" fill="#fff" /></svg></IconButton>
          <IconButton aria-label="Restore"><svg width="13" height="13" fill="none" stroke="#fff"><path d="M4 4V1h8v6H9" /><path d="M.8 5h8v7h-8z" /><path d="M4 1.500h8M1 5.500h8" strokeWidth="1.800" /></svg></IconButton>
          <IconButton aria-label="Close"><Close s={11} c="#fff" w={2.6} /></IconButton>
        </Controls>
      </SessionBar>
      <ConnectionBar>
        <UnpinArea aria-label="Unpin">
          <svg width="18" height="18" viewBox="0 0 20 20" fill="none" stroke="#444" strokeWidth="1.900"><path d="M2 2l16 16M5 7L2.500 9.500l8 8L13 15M2 18l4.500-4.500M8 4.500L12 2l6 6-3 4" /></svg>
        </UnpinArea>
        <ConnectionBody>
          <Signal w={24} h={18} c="#222" />
          <ConnectionAddress>10.15.1.32</ConnectionAddress>
          <Controls $gap={38}>
            <IconButton aria-label="Minimize"><Minimize c="#222" w={1.5} /></IconButton>
            <IconButton aria-label="Restore"><Restore s={15} c="#222" w={1.5} /></IconButton>
            <IconButton aria-label="Close"><Close s={13} c="#222" w={1.6} /></IconButton>
          </Controls>
        </ConnectionBody>
      </ConnectionBar>
    </>
  );
}

const RedArrow = styled(Overlay)`
  filter: drop-shadow(2px 3px 2px rgba(0, 0, 0, 0.4));
`;

function RedArrows() {
  return (
    <>
      <RedArrow $x={540} $y={256} width="80" height="36">
        <path d="M7 7.500L54 9.500 55 5 79 19 53 31 52.500 21 6 16.500a4.500 4.500 0 0 1 1-9z" fill="#fb4144" />
      </RedArrow>
      <RedArrow $x={600} $y={544} width="50" height="76">
        <path d="M45.500 2L44.500 30 36.500 26 9 74a4.500 4.500 0 0 1-8-5L28.500 21 22 17z" fill="#fb4144" />
      </RedArrow>
      <Overlay $x={678} $y={529} width="12" height="18">
        <path d="M1 1v14l3.500-3 2 5 2.500-1-2-5h4.500z" fill="#fff" stroke="#555" strokeWidth="1" />
      </Overlay>
    </>
  );
}

function TaskbarRow() {
  return (
    <Taskbar>
      <TaskCenter>
        <IconButton aria-label="Start">
          <svg width="25" height="25"><path d="M0 0h12v12H0z" fill="#35a8ee" /><path d="M13 0h12v12H13zM0 13h12v12H0z" fill="#178be0" /><path d="M13 13h12v12H13z" fill="#0c72d2" /></svg>
        </IconButton>
        <SearchPill>
          <svg width="17" height="17" fill="none" stroke="#333" strokeWidth="2"><circle cx="7" cy="7" r="5.800" /><path d="M11.500 11.500L16 16" /></svg>
          <input aria-label="Search" placeholder="Search" />
        </SearchPill>
        <TaskButton aria-label="Task view">
          <svg width="26" height="25"><rect x="6" y="0" width="19" height="17" fill="#f8f8f8" /><rect x="0" y="6" width="19" height="18" fill="#2d2d2d" /><rect x="6" y="6" width="13" height="11" fill="#b9b9b9" /></svg>
          <TaskMark $kind="none" />
        </TaskButton>
        <TaskGap $w={14} />
        <TaskButton aria-label="File Explorer" $active>
          <svg width="27" height="24"><path d="M0 1h10l3 3H0z" fill="#d99a1c" /><path d="M0 4h27v19H0z" fill="#fcc93e" /><path d="M5 23v-5q0-2 2-2h13q2 0 2 2v5z" fill="#1266bd" /></svg>
          <TaskMark $kind="bar" />
        </TaskButton>
        <TaskGap $w={15} />
        <TaskButton aria-label="Edge">
          <svg width="26" height="26">
            <defs>
              <linearGradient id="edge-top" x1="0" y1="0" x2="1" y2=".6"><stop offset="0" stopColor="#2795dc" /><stop offset=".5" stopColor="#2bb5c4" /><stop offset="1" stopColor="#54cf5c" /></linearGradient>
            </defs>
            <circle cx="13" cy="13" r="13" fill="#1a7fd4" />
            <path d="M.5 10A13 13 0 0 1 26 13q0 6-6.500 6-5 0-4-2.500 2-2 .5-5Q14 8 9 8 4 8 .5 12z" fill="url(#edge-top)" />
            <path d="M10 11q-4 7 2 11 5 3 11.500-1Q18 29 10 25 3 20 6 14q1.500-2.500 4-3z" fill="#0f4fa3" />
            <path d="M13.500 11q-3.500 2-1.500 6 3 4.500 12.500 2.500.5 1-.5 1.500-3 0-4.500-1.500-5-.5-4.500-3.500 2-2 .5-4.500-1-1-2-.5z" fill="#fff" />
          </svg>
          <TaskMark $kind="none" />
        </TaskButton>
        <TaskGap $w={22} />
        <TaskButton aria-label="Server Manager"><ServerIcon s={26} /><TaskMark $kind="dot" /></TaskButton>
      </TaskCenter>
      <Tray>
        <IconButton aria-label="Remote status">
          <svg width="34" height="18"><rect x="0" y="3" width="7" height="12" rx="2" fill="#1262c4" /><rect x="10" y="3" width="8" height="12" rx="2" fill="#6cc8f2" /><path d="M6 7h5v4H6z" fill="#2e8ad8" /><circle cx="14" cy="13" r="3.500" fill="#fff" stroke="#d8402c" strokeWidth="2" /></svg>
        </IconButton>
        <IconButton aria-label="Network">
          <svg width="27" height="18" fill="none" stroke="#444" strokeWidth="1.400"><path d="M11 1.500H2.500q-1.500 0-1.500 1.500v8.500q0 1.500 1.500 1.500H15V9M6 17h8M8 13v4M12 13v4" /><path d="M13.500 1.500h4v3.500q-2 2.500-4 0zM15.500 6v3" /></svg>
        </IconButton>
        <IconButton aria-label="Volume">
          <svg width="18" height="16" fill="none" stroke="#444" strokeWidth="1.300"><path d="M1 5.500h3L8 2v12l-4-3.500H1zM10.500 5.500q2 2.500 0 5M13 3.500q3.500 4.500 0 9M15 1.500q4.500 6.500 0 13" /></svg>
        </IconButton>
        <Clock>2:07 PM<br />5/17/2025</Clock>
        <IconButton aria-label="Notifications">
          <svg width="17" height="17" fill="none" stroke="#444" strokeWidth="1.200"><path d="M8 1.500q-5 .5-5 5v4L1.500 13h13L13 10.500M6 15.500h4" /><path d="M6 6h3L6 10h3M11 1.500h4L11 6h4" /></svg>
        </IconButton>
      </Tray>
    </Taskbar>
  );
}

export default function App() {
  return (
    <Desktop>
      <Global />
      <ServerManagerWindow />
      <ExplorerWindow />
      <PropertiesDialog />
      <RemoteBars />
      <RedArrows />
      <TaskbarRow />
    </Desktop>
  );
}
